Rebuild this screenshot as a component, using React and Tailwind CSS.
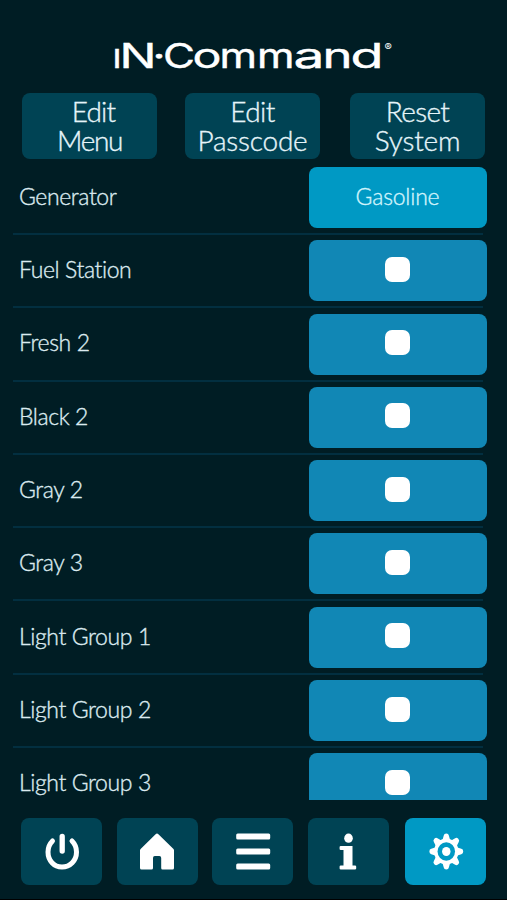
const actions = [
  { lines: ["Edit", "Menu"], pos: "ml-[22px]", tracking: ["tracking-[-0.8px] pl-[8px]", "tracking-[-1.4px]"] },
  { lines: ["Edit", "Passcode"], pos: "ml-[28px]", tracking: ["tracking-[-0.6px]", "tracking-[-0.2px]"] },
  { lines: ["Reset", "System"], pos: "ml-[30px]", tracking: ["tracking-[-0.7px]", "tracking-[-0.2px]"] },
];

const settings = [
  { label: "Generator", value: "Gasoline" },
  { label: "Fuel Station" },
  { label: "Fresh 2" },
  { label: "Black 2" },
  { label: "Gray 2" },
  { label: "Gray 3" },
  { label: "Light Group 1" },
  { label: "Light Group 2" },
  { label: "Light Group 3" },
];

// each wordmark letter is stretched to its own width: [letters, x, width]
const wordmark = [
  ["ı", 112.5, 9],
  ["N", 119.5, 37],
  ["·", 152.5, 13],
  ["C", 163, 32],
  ["o", 192.5, 29],
  ["mm", 219.5, 75],
  ["a", 293.5, 31],
  ["n", 322.5, 30],
  ["d", 350.5, 33],
];

function Logo() {
  return (
    <svg width="507" height="93" viewBox="0 0 507 93" className="block shrink-0" fill="#fff">
      <text y="67.8" fontSize="33.5" fontWeight="400" stroke="#fff" strokeWidth="0.4" className="font-['Inter',sans-serif]">
        {wordmark.map(([t, x, w]) => (
          <tspan key={t} x={x} textLength={w} lengthAdjust="spacingAndGlyphs">{t}</tspan>
        ))}
      </text>
      <text x="384.5" y="51" fontSize="11" className="font-['Inter',sans-serif]">®</text>
    </svg>
  );
}

function PowerIcon() {
  return (
    <svg width="40" height="40" viewBox="0 0 40 40" fill="none" stroke="#fff" strokeWidth="5" strokeLinecap="round">
      <path d="M10.500 9C7.500 12 6 15.500 6 20C6 28.500 12 35 20 35S34.500 28.500 34.500 20C34.500 15.500 33 12 30 9" />
      <path d="M20.200 4.500V19" strokeWidth="5.300" />
    </svg>
  );
}

function HomeIcon() {
  return (
    <svg width="40" height="40" viewBox="0 0 40 40" fill="#fff">
      <path d="M20 1.500Q20.700 1.500 21.400 2.300L36.500 17Q37 17.600 37 18.400V36Q37 37.500 35.500 37.500H25.500Q24.200 37.500 24.200 36V26Q24.200 24 22.400 24H17.800Q16 24 16 26V36Q16 37.500 14.500 37.500H4.500Q3 37.500 3 36V18.400Q3 17.600 3.600 17L18.600 2.300Q19.300 1.500 20 1.500Z" />
    </svg>
  );
}

function MenuIcon() {
  return (
    <svg width="40" height="40" viewBox="0 0 40 40" fill="#fff">
      <rect x="3.200" y="1.500" width="34" height="6" rx="1.500" />
      <rect x="3.200" y="16.500" width="34" height="6" rx="1.500" />
      <rect x="3.200" y="31.500" width="34" height="6" rx="1.500" />
    </svg>
  );
}

function InfoIcon() {
  return (
    <svg width="40" height="40" viewBox="0 0 40 40" fill="#fff">
      <ellipse cx="20.500" cy="6.200" rx="4.300" ry="4.600" />
      <path d="M12.800 14H24.500V33.500H27Q28.200 33.500 28.200 34.500V36.500Q28.200 37.500 27 37.500H12.800Q11.600 37.500 11.600 36.500V34.500Q11.600 33.500 12.800 33.500H15.500V18H12.800Q11.600 18 11.600 17V15Q11.600 14 12.800 14Z" />
    </svg>
  );
}

function GearIcon() {
  return (
    <svg width="40" height="40" viewBox="0 0 40 40" fill="#fff">
      <g transform="translate(20.300 19.500) scale(.94 1)">
        {[0, 45, 90, 135, 180, 225, 270, 315].map((a) => (
          <path key={a} transform={`rotate(${a})`} d="M-4.200 -11L-2.700 -16Q-2.400 -18 0 -18Q2.400 -18 2.700 -16L4.200 -11Z" />
        ))}
        <circle r="13" />
        <circle r="9.300" fill="#0099c4" />
        <circle r="4.500" />
      </g>
    </svg>
  );
}

const tabs = [
  { name: "power", icon: <PowerIcon />, style: "bg-[#004354]" },
  { name: "home", icon: <HomeIcon />, style: "bg-[#004354]" },
  { name: "menu", icon: <MenuIcon />, style: "bg-[#004354]" },
  { name: "info", icon: <InfoIcon />, style: "bg-[#004354]" },
  { name: "settings", icon: <GearIcon />, style: "ml-[2px] bg-[#0099c4]" },
];

export default function App() {
  return (
    <div className="flex h-[900px] w-[507px] flex-col overflow-hidden border-b border-black bg-[#001d24] font-['Lato',sans-serif] text-[#dcebf0] [font-variant-ligatures:none] [-webkit-text-stroke:0.35px]">
      <Logo />

      {/* Top actions */}
      <div className="flex shrink-0">
        {actions.map((a) => (
          <button
            key={a.lines[1]}
            className={`flex h-[66px] w-[135px] flex-col items-center justify-center rounded-lg bg-[#004354] text-[28px] leading-[29px] font-light text-[#e6f5fa] ${a.pos}`}
          >
            <span className={a.tracking[0]}>{a.lines[0]}</span>
            <span className={a.tracking[1]}>{a.lines[1]}</span>
          </button>
        ))}
      </div>

      {/* Settings list, last row is cut off by the tab bar */}
      <div className="mt-[3px] h-[638px] shrink-0 overflow-hidden pr-[20.5px] pl-[13px]">
        {settings.map((s) => (
          <div key={s.label} className="h-[73.3px]">
            <div className="flex h-[71px] items-center justify-between pl-[6px]">
              <span className="pb-[3px] text-[23px] font-light tracking-[-0.4px]">{s.label}</span>
              <button
                className={`flex h-[61px] w-[178px] items-center justify-center rounded-lg pb-[3px] text-[23px] font-light tracking-[-0.2px] ${s.value ? "bg-[#0099c4] text-[#d2f4fc]" : "bg-[#1187b5]"}`}
              >
                {s.value || <span className="h-[25px] w-[25px] rounded-[7px] bg-white" />}
              </button>
            </div>
            <div className="mr-[4px] h-[2px] bg-[#022f40]" />
          </div>
        ))}
      </div>

      {/* Tab bar */}
      <div className="mt-[18px] flex shrink-0 gap-[14.6px] pl-[21px]">
        {tabs.map((t) => (
          <button key={t.name} aria-label={t.name} className={`flex h-[67px] w-[81px] shrink-0 items-center justify-center rounded-lg ${t.style}`}>
            {t.icon}
          </button>
        ))}
      </div>
    </div>
  );
}
